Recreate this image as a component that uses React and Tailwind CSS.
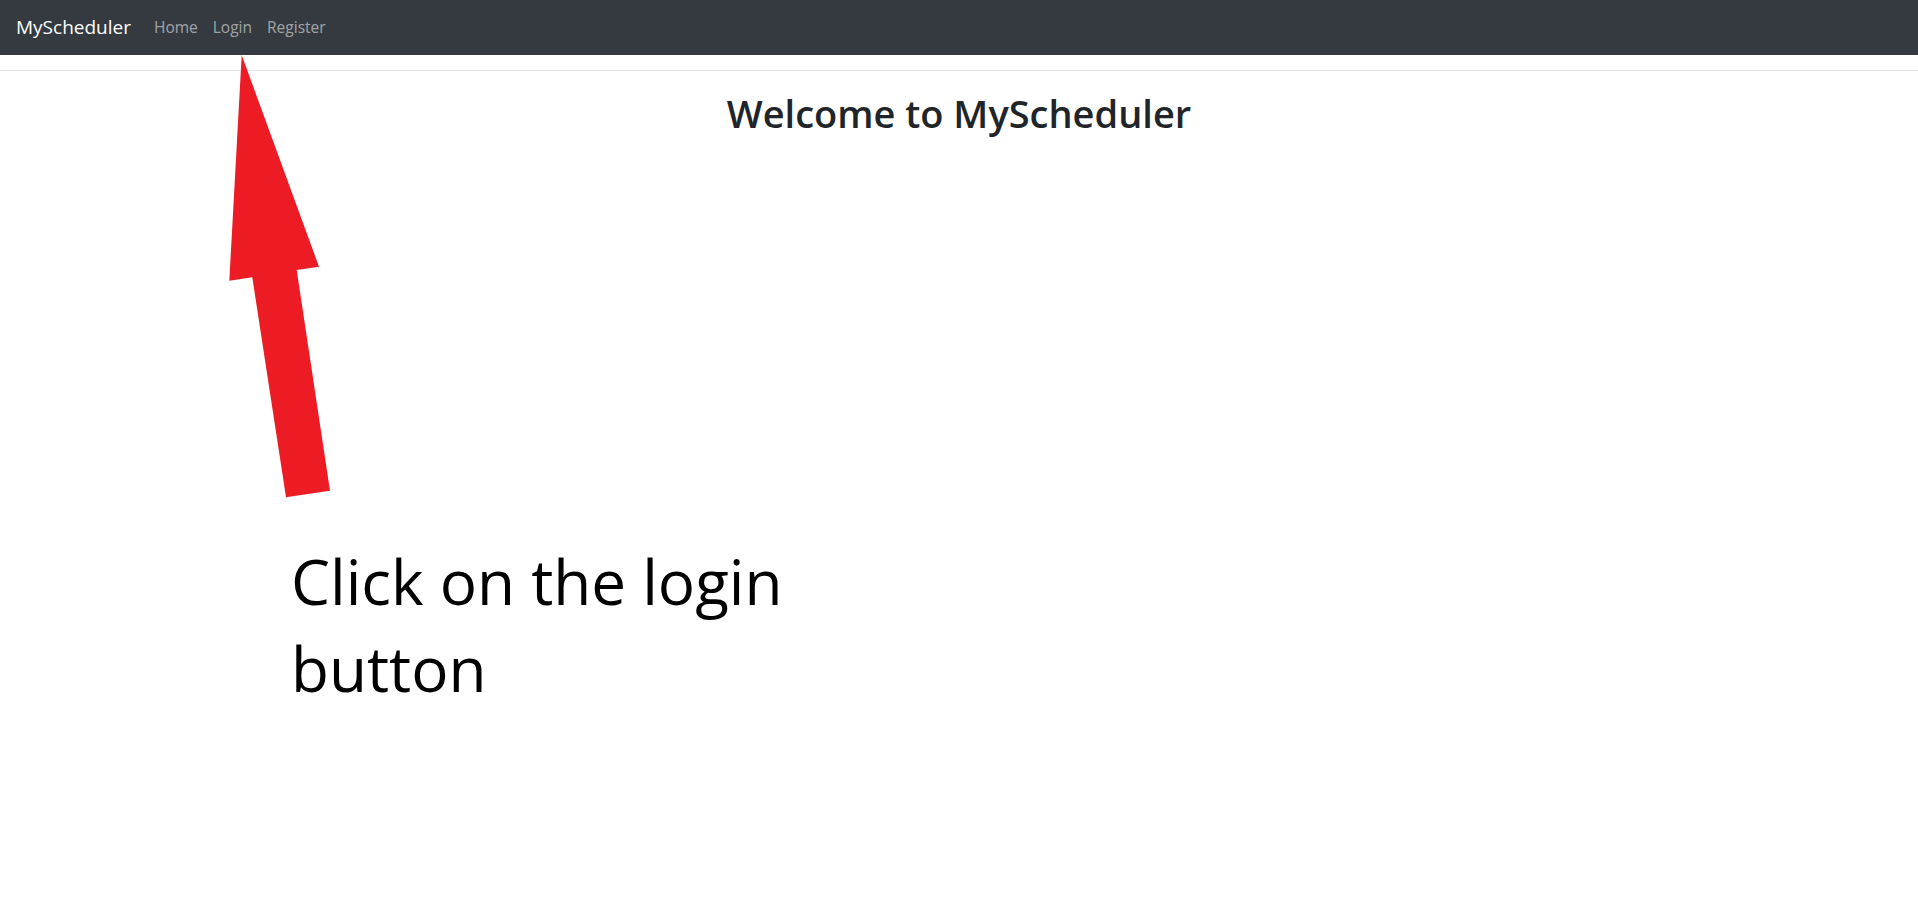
export default function App() {
  return (
    <div
      className="relative min-h-[915px] bg-white"
      style={{ fontFamily: '"Open Sans", "Noto Sans", sans-serif' }}
    >
      {/* Navbar */}
      <nav className="h-[55px] bg-[#343a40] flex items-center px-4">
        <a href="#" className="text-white text-[19px] mr-[23px] leading-none">
          MyScheduler
        </a>
        <div className="flex items-center gap-[15px] text-[15.5px] text-[rgba(255,255,255,0.55)]">
          <a href="#">Home</a>
          <a href="#">Login</a>
          <a href="#">Register</a>
        </div>
      </nav>
      <div className="h-[16px] border-b border-[#e5e5e5]" />

      <main className="pt-[20px] text-center">
        <h1 className="text-[38px] font-semibold text-[#212529] leading-[1.2]">
          Welcome to MyScheduler
        </h1>
      </main>

      {/* Annotation arrow */}
      <svg
        className="absolute left-0 top-0 pointer-events-none"
        width="400"
        height="520"
        viewBox="0 0 400 520"
      >
        <polygon
          points="241.7,55 319,266.7 296.7,270 330,490.7 286,497.3 252.3,277.3 229.3,280.7"
          fill="#ed1c24"
        />
      </svg>

      {/* Annotation text */}
      <p className="absolute left-[291px] top-[538px] w-[520px] text-[62px] leading-[87px] text-black">
        Click on the login button
      </p>
    </div>
  );
}
